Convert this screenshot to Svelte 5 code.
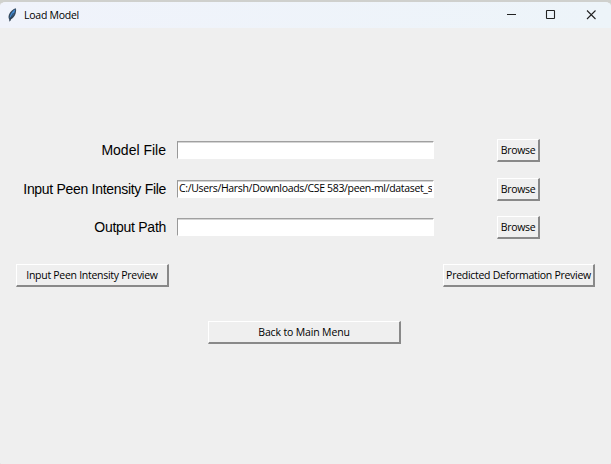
<script>
  const rows = [
    { label: 'Model File', value: '', spacing: 0 },
    { label: 'Input Peen Intensity File', value: 'C:/Users/Harsh/Downloads/CSE 583/peen-ml/dataset_s', spacing: -0.3 },
    { label: 'Output Path', value: '', spacing: -0.28 }
  ];
</script>

<div class="window">
  <header>
    <svg class="feather" width="12" height="16" viewBox="0 0 12 16">
      <path d="M9.8 1.200C7.300 1.800 4.200 4.300 3 7.600c-.7 2-.6 3.500.2 4.900L3.800 15l.7-2.300C7 11.500 9 9 9.700 6.200c.5-1.900.6-3.700.1-5z" fill="#34495f" />
      <path d="M9.300 2.300C6.300 4 4 7.300 3.600 11.200c3-1.700 5.200-4.900 5.700-8.900z" fill="#438bd3" />
      <path d="M7.500 6C6 8 4.700 10.500 3.900 14" fill="none" stroke="#243343" stroke-width=".7" />
    </svg>
    <span class="title">Load Model</span>
    <svg class="controls" width="92" height="12" viewBox="0 0 92 12" fill="none" stroke="#222" stroke-width="1.100">
      <path d="M1 5.500h9" />
      <rect x="40.500" y="1.500" width="8" height="8" rx=".5" />
      <path d="M81 1.500l8.500 8.500M89.500 1.500L81 10" />
    </svg>
  </header>
  <main>
    <div class="form">
      {#each rows as row}
        <div class="row">
          <span class="label" style="letter-spacing: {row.spacing}px">{row.label}</span>
          <div class="entry"><span>{row.value}</span></div>
          <button class="browse">Browse</button>
        </div>
      {/each}
    </div>
    <div class="previews">
      <button class="left">Input Peen Intensity Preview</button>
      <button class="right">Predicted Deformation Preview</button>
    </div>
    <button class="back">Back to Main Menu</button>
  </main>
</div>

<style>
  :global(body) { margin: 0; overflow: hidden; background: #d0d1cd; }
  * { box-sizing: border-box; }
  .window {
    display: flex;
    flex-direction: column;
    width: 611px;
    height: 464px;
    border-top: 2px solid #cfd0cd;
    border-radius: 6px 6px 1px 1px;
    overflow: hidden;
    background: #efefef;
    font: 10.5px/16px "Open Sans", "Noto Sans", sans-serif;
    color: #000;
  }
  header {
    display: flex;
    flex: none;
    align-items: center;
    height: 26px;
    padding: 0 13px 0 6px;
    background: linear-gradient(90deg, #f0f3fb, #edf4f9);
  }
  .title { margin-left: 6px; letter-spacing: -0.25px; }
  .controls { margin-left: auto; }
  main { display: flex; flex-direction: column; padding-top: 111px; }
  .form { display: flex; flex-direction: column; height: 116px; }
  .row { display: flex; align-items: flex-start; height: 38.5px; }
  .label {
    width: 166px;
    padding-top: 2px;
    text-align: right;
    white-space: nowrap;
    font: 14px/18px "Liberation Sans", Arial, sans-serif;
  }
  .entry {
    width: 257px;
    height: 18px;
    margin: 2px 0 0 11px;
    padding: 0 1px;
    border: 1px solid #fff;
    border-top: 1px solid #a0a0a0;
    border-left: 1px solid #999;
    background: #fff;
    box-shadow: inset 0 1px #d4d4d4;
    overflow: hidden;
    white-space: nowrap;
    line-height: 15px;
    letter-spacing: -0.33px;
  }
  .entry span { display: block; overflow: hidden; }
  button {
    height: 23px;
    padding: 0;
    border: solid;
    border-width: 1px 2px 2px 1px;
    border-color: #fff #898989 #898989 #fff;
    border-radius: 0;
    background: #efefef;
    font: inherit;
    color: inherit;
    white-space: nowrap;
    letter-spacing: -0.28px;
  }
  .browse { width: 43px; margin-left: 63px; }
  .previews { display: flex; justify-content: space-between; padding: 9px 16px 0 16px; }
  .left { width: 153px; }
  .right { width: 152px; }
  .back { width: 193px; margin: 34px 0 0 208px; letter-spacing: -0.15px; }
</style>
